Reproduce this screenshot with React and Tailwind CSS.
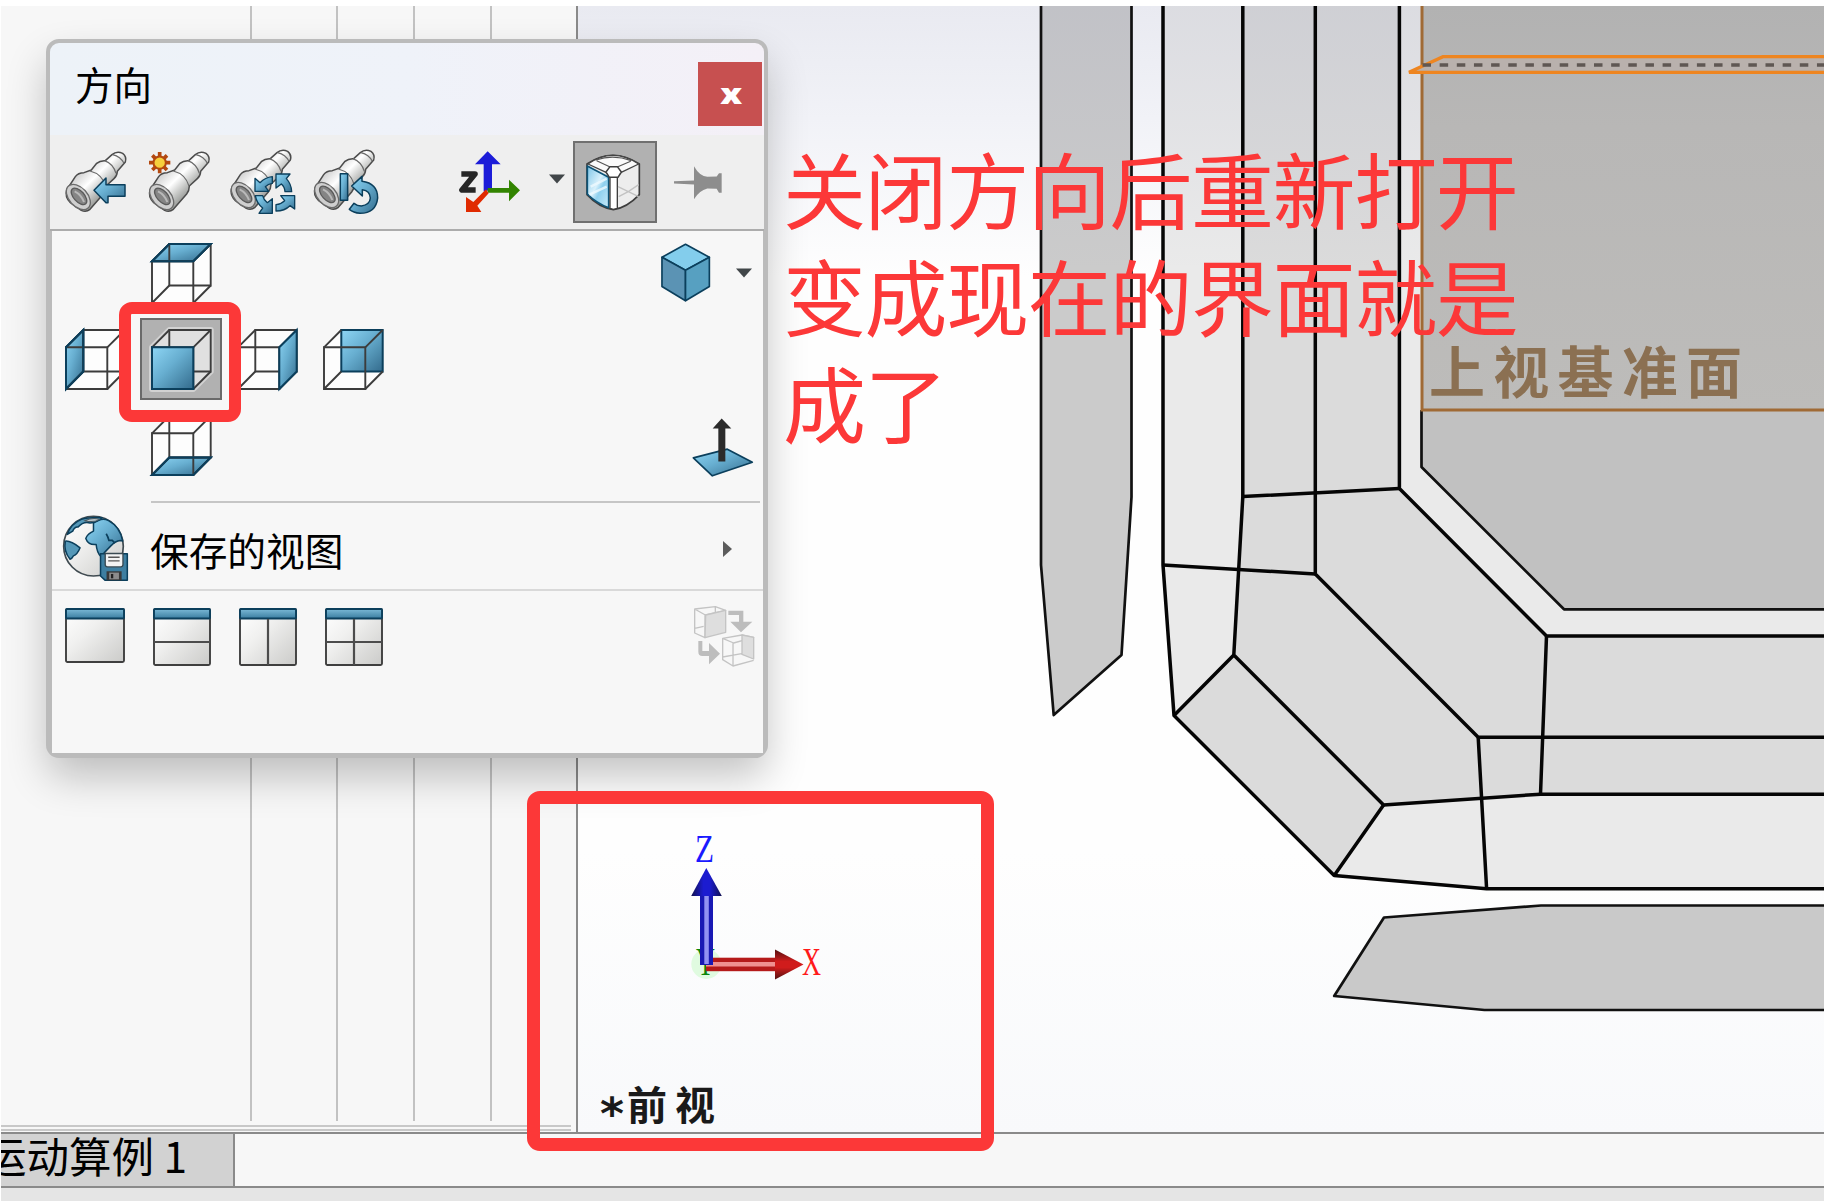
const CJK = "font-['Noto_Sans_CJK_SC','Noto_Sans',sans-serif]";

const EDGE = '#3c3c3c';
const NAVY = '#0b3f5c';

function Defs() {
  return (
    <svg className="absolute h-0 w-0" aria-hidden="true">
      <defs>
        <linearGradient id="blue" x1="0" y1="0" x2="1" y2="1">
          <stop offset="0" stopColor="#8ed6f5" />
          <stop offset="0.45" stopColor="#67aed0" />
          <stop offset="1" stopColor="#336b8c" />
        </linearGradient>
        <linearGradient id="metal" x1="0.3" y1="0.3" x2="0.68" y2="0.68">
          <stop offset="0" stopColor="#d6d6d6" />
          <stop offset="0.4" stopColor="#ffffff" />
          <stop offset="1" stopColor="#999b98" />
        </linearGradient>
        <linearGradient id="pane" x1="0" y1="0" x2="1" y2="1">
          <stop offset="0" stopColor="#ffffff" />
          <stop offset="0.4" stopColor="#f0f0ef" />
          <stop offset="1" stopColor="#cbcbc9" />
        </linearGradient>
        <linearGradient id="bar" x1="0" y1="0" x2="0" y2="1">
          <stop offset="0" stopColor="#7bb9d6" />
          <stop offset="1" stopColor="#3a7da0" />
        </linearGradient>
        <linearGradient id="glass" x1="0" y1="0" x2="1" y2="1">
          <stop offset="0" stopColor="#7cc4e6" />
          <stop offset="0.45" stopColor="#d9f1fc" />
          <stop offset="0.6" stopColor="#8fd0ee" />
          <stop offset="1" stopColor="#c7eafa" />
        </linearGradient>
      </defs>
    </svg>
  );
}

function Telescope({ dx = 0, dy = 0 }) {
  return (
    <g transform={`translate(${dx} ${dy})`} strokeLinejoin="round">
      <path
        d="M360 480 L386 440 Q394 428 412 428 L434 420 L450 400 Q460 391 476 392 L496 374 Q510 362 528 370 Q541 380 536 396 L512 424 Q511 438 502 446 L478 468 Q478 482 470 492 L430 538 Q418 548 404 541 L370 517 Q354 500 360 480Z"
        fill="url(#metal)"
        stroke="#4c4c4c"
        strokeWidth="4.5"
      />
      <path d="M430 423 Q466 432 477 468 M474 392 Q500 402 508 430 M498 374 Q522 380 532 400" fill="none" stroke="#6a6a6a" strokeWidth="3.5" />
      <ellipse cx="395" cy="501" rx="44" ry="28" transform="rotate(48 395 501)" fill="#cfcfcf" stroke="#6a6a6a" strokeWidth="4" />
      <ellipse cx="397" cy="499" rx="30" ry="16" transform="rotate(48 397 499)" fill="#858585" stroke="#5a5a5a" strokeWidth="4" />
      <path d="M384 484 Q404 494 412 516" fill="none" stroke="#b9b9b9" strokeWidth="6" />
    </g>
  );
}

function PreviousViewIcon() {
  return (
    <svg viewBox="90 348 216 216" className="h-[72px] w-[72px]">
      <Telescope dx={-250} />
      <path d="M192 481 L228 444 V464 H285 V499 H234 V518 H228Z" fill="url(#blue)" stroke={NAVY} strokeWidth="4.5" strokeLinejoin="round" />
    </svg>
  );
}

function NewViewIcon() {
  return (
    <svg viewBox="342 348 216 216" className="h-[72px] w-[72px]">
      <Telescope />
      <g stroke="#b3480f" strokeWidth="11">
        <path d="M389 366 V430 M357 398 H421 M367 376 L411 420 M411 376 L367 420" />
      </g>
      <circle cx="389" cy="398" r="18.5" fill="#f6cf3c" stroke="#b3480f" strokeWidth="6" />
    </svg>
  );
}

function UpdateViewsIcon() {
  return (
    <svg viewBox="594 348 216 216" className="h-[72px] w-[72px]">
      <Telescope dx={245} dy={-6} />
      <g fill="url(#blue)" stroke={NAVY} strokeWidth="4" strokeLinejoin="round">
        <path d="M675 445 L690 458 Q706 442 727 440 V460 Q714 462 706 470 L716 484 H675Z" />
        <path d="M738 432 H780 L769 446 Q784 462 785 485 H765 Q764 470 754 462 L738 474Z" />
        <path d="M794 497 V537 L780 527 Q764 543 738 543 V524 Q754 522 764 512 L752 497Z" />
        <path d="M676 497 H698 Q700 508 712 518 L727 506 V550 H687 L698 534 Q680 520 676 497Z" />
      </g>
    </svg>
  );
}

function ResetViewsIcon() {
  return (
    <svg viewBox="846 348 216 216" className="h-[72px] w-[72px]">
      <Telescope dx={495} dy={-6} />
      <g fill="url(#blue)" stroke={NAVY} strokeWidth="4.5" strokeLinejoin="round">
        <path d="M931 431 H953 V511 H931Z" />
        <path d="M965 468 L996 439 V454 Q1043 460 1043 504 Q1038 550 990 550 Q970 548 958 538 L972 520 Q982 528 994 528 Q1020 524 1021 504 Q1020 482 997 479 V498Z" />
      </g>
    </svg>
  );
}

function AxesIcon() {
  return (
    <svg viewBox="108 348 216 216" className="h-[72px] w-[72px]">
      <path d="M191 484 V403 H165 L203 364 L242 403 H216 V480Z" fill="#1c1cd8" />
      <path d="M203 474 H267 V449 L300 481 L267 514 V488 H203Z" fill="#328400" />
      <path d="M198 478 L206 490 L172 527 L184 546 H138 V501 L160 516Z" fill="#e02a00" />
      <path d="M124 432 H165 L126 480 H167" fill="none" stroke="#262626" strokeWidth="17" strokeLinejoin="round" />
    </svg>
  );
}

function ViewSelectorIcon() {
  return (
    <svg viewBox="486 360 186 192" className="mr-[4px] h-[64px] w-[62px]">
      <path d="M501 402 Q578 350 658 402 V494 Q620 534 580 539 Q536 532 501 494Z" fill="#ededed" stroke="#3d3d3d" strokeWidth="5" strokeLinejoin="round" />
      <path d="M502 408 L566 442 V533 Q530 520 502 492Z" fill="url(#glass)" stroke="#0d5478" strokeWidth="5" strokeLinejoin="round" />
      <path d="M512 470 L560 446 M508 494 L560 470" stroke="#effaff" strokeWidth="7" opacity="0.8" />
      <path d="M570 440 H592 V535 L580 538 L570 535Z" fill="#fff" stroke="#3d3d3d" strokeWidth="4" />
      <path d="M594 470 L656 500 M596 500 L626 484 L656 464" fill="none" stroke="#c2c2c2" strokeWidth="4" />
      <path d="M504 402 Q578 350 656 402 L602 428 Q580 402 560 428Z" fill="#fafafa" stroke="#444" strokeWidth="4" strokeLinejoin="round" />
      <path d="M530 392 L572 412 M632 394 L590 412 M528 390 Q580 372 634 392" fill="none" stroke="#555" strokeWidth="3.5" />
      <path d="M558 426 L570 410 H592 L604 426 L594 442 H568Z" fill="#fff" stroke="#3d3d3d" strokeWidth="4.5" strokeLinejoin="round" />
    </svg>
  );
}

function PinIcon() {
  return (
    <svg viewBox="756 400 162 116" className="h-[39px] w-[54px]">
      <path d="M762 454 L822 452 V409 Q838 438 862 441 L890 440 L897 430 H905 V489 H897 L890 477 L862 476 Q838 482 822 508 V464 L762 461Z" fill="#8d8d8d" />
    </svg>
  );
}

function Caret() {
  return (
    <svg viewBox="0 0 16 10" className="h-[10px] w-[16px]">
      <path d="M0 0.5 H16 L8 9.5Z" fill="#414649" />
    </svg>
  );
}

const FACES = {
  top: '1,18.3 18.3,1 59.7,1 42.3,18.3',
  bottom: '1,60 18.3,42.5 59.7,42.5 42.3,60',
  left: '1,18.3 18.3,1 18.3,42.5 1,60',
  right: '42.3,18.3 59.7,1 59.7,42.5 42.3,60',
  front: '1,18.3 42.3,18.3 42.3,60 1,60',
  back: '18.3,1 59.7,1 59.7,42.5 18.3,42.5',
};

function WireCube({ face, selected }) {
  const front = face === 'front';
  const blue = <polygon points={FACES[face]} fill="url(#blue)" stroke={NAVY} strokeWidth="2" />;
  return (
    <svg viewBox="0 0 61 61" className="h-[61px] w-[61px] overflow-visible">
      {selected && <polygon points="1,18.3 18.3,1 59.7,1 59.7,42.5 42.3,60 1,60" fill="none" stroke="#d2d2d2" strokeWidth="6" strokeLinejoin="round" />}
      <polygon points="1,18.3 18.3,1 59.7,1 59.7,42.5 42.3,60 1,60" fill={selected ? '#e0e0e0' : '#fdfdfd'} />
      {!front && face !== 'right' && blue}
      <g fill="none" stroke={EDGE} strokeWidth="1.9">
        {face !== 'back' && <path d="M18.3 1 H59.7 V42.5 H18.3Z" />}
        <path d="M1 18.3 L18.3 1 M1 60 L18.3 42.5 M42.3 60 L59.7 42.5 M42.3 18.3 L59.7 1" />
        <path d="M1 18.3 H42.3 V60 H1Z" />
      </g>
      {(front || face === 'right') && blue}
      {(face === 'top' || face === 'left' || face === 'bottom') && (
        <polygon points={FACES[face]} fill="none" stroke={NAVY} strokeWidth="2" />
      )}
    </svg>
  );
}

function CubeCell({ face }) {
  if (!face) return <div />;
  const selected = face === 'front';
  return (
    <div className="flex items-center justify-center">
      {selected ? (
        <div className="flex h-[82px] w-[82px] items-center justify-center border-2 border-[#6a6a6a] bg-[#b1b1b1]">
          <WireCube face={face} selected />
        </div>
      ) : (
        <WireCube face={face} />
      )}
    </div>
  );
}

function SolidCubeIcon() {
  return (
    <svg viewBox="722 640 152 178" className="h-[59px] w-[51px]">
      <g stroke={NAVY} strokeWidth="5" strokeLinejoin="round">
        <path d="M798 644 L870 683 L798 722 L727 683Z" fill="#83cdec" />
        <path d="M727 683 L798 722 V814 L727 771Z" fill="#5b93b4" />
        <path d="M870 683 L798 722 V814 L870 771Z" fill="#57a0c1" />
      </g>
    </svg>
  );
}

function NormalToIcon() {
  return (
    <svg viewBox="278 50 186 182" className="h-[61px] w-[62px]">
      <path d="M282 172 L384 146 L459 185 L339 226Z" fill="url(#blue)" stroke={NAVY} strokeWidth="5" strokeLinejoin="round" />
      <path d="M357 183 V84 H340 L367 54 L396 84 H378 V183Z" fill="#2b2b2b" />
    </svg>
  );
}

function GlobeSaveIcon() {
  return (
    <svg viewBox="66 82 200 200" className="mt-[5px] h-[67px] w-[67px]">
      <circle cx="160" cy="175" r="89" fill="url(#pane)" stroke="#3f4a50" strokeWidth="5" />
      <path d="M160 106 Q185 88 205 99 Q240 118 247 160 L240 158 Q225 160 214 172 Q200 186 182 206 Q170 194 168 170 Q144 172 137 152 Q142 138 160 130Z" fill="url(#blue)" stroke={NAVY} strokeWidth="4.5" strokeLinejoin="round" />
      <path d="M76 160 Q92 158 120 180 Q112 200 100 204 Q96 212 90 214 Q70 190 76 160Z" fill="#5598b8" stroke={NAVY} strokeWidth="4.5" strokeLinejoin="round" />
      <path d="M82 140 Q92 108 124 95 Q146 88 186 90 Q172 104 150 106 Q130 100 114 118 Q104 116 98 130Z" fill="#5598b8" stroke={NAVY} strokeWidth="4.5" strokeLinejoin="round" />
      <path d="M134 99 Q158 88 178 95 Q160 106 134 99Z" fill="#b9c4c9" stroke="#4a5960" strokeWidth="3" />
      <path d="M198 138 Q204 148 206 158 L216 158 L224 166" fill="none" stroke={NAVY} strokeWidth="5" />
      <path d="M181 198 H261 V277 H195 L181 264Z" fill="#3e7fa1" stroke={NAVY} strokeWidth="4.5" strokeLinejoin="round" />
      <path d="M195 197 H248 V230 Q248 237 241 237 H202 Q195 237 195 230Z" fill="#f3f3f3" stroke="#3a4a52" strokeWidth="4" />
      <path d="M204 208 H238 M204 219 H238" stroke="#555" strokeWidth="4" />
      <path d="M199 250 H244 V277 H199Z" fill="#3a3a3a" />
      <path d="M207 254 H236 V274 H207Z" fill="#8c8c8c" />
      <path d="M212 258 H219 V271 H212Z" fill="#222" />
    </svg>
  );
}

function PaneIcon({ h = 58, horizontal, vertical }) {
  const w = h === 55 ? 60 : 58;
  return (
    <svg width={w} height={h} viewBox={`0 0 ${w} ${h}`}>
      <rect x="1" y="1" width={w - 2} height={h - 2} rx="1.5" fill="url(#pane)" stroke="#3f3f3f" strokeWidth="1.9" />
      <rect x="1" y="1" width={w - 2} height="9.5" rx="1" fill="url(#bar)" stroke={NAVY} strokeWidth="1.9" />
      {horizontal && <path d={`M1 34 H${w - 1}`} stroke="#4c4c4c" strokeWidth="2.2" />}
      {vertical && <path d={`M29 11 V${h - 1}`} stroke="#4c4c4c" strokeWidth="2.2" />}
    </svg>
  );
}

function LinkViewsIcon() {
  return (
    <svg viewBox="278 616 186 186" className="h-[62px] w-[62px]">
      <g fill="none" stroke="#c4c4c4" strokeWidth="4" strokeLinejoin="round">
        <path d="M283 628 L345 621 L376 632 L315 646Z M283 628 V700 L314 714 V646 M283 686 L310 680 M345 621 V640" />
        <path d="M316 646 L376 632 V698 L314 714Z" fill="#dedede" />
        <path d="M367 716 L425 706 L460 713 L400 730Z M367 716 V780 L398 799 V730 M398 799 L460 782 M367 772 L424 762 L460 776" />
        <path d="M425 706 L460 713 V778 L425 764Z" fill="#dedede" />
      </g>
      <path d="M384 633 H429 V666 H456 L422 698 L390 666 H416 V646 H384Z M294 724 H306 V754 H326 V730 L359 762 L326 794 V769 H306 Q294 769 294 756Z" fill="#bdbdbd" />
    </svg>
  );
}

function OrientationDialog() {
  const cells = [null, 'top', null, null, 'left', 'front', 'right', 'back', null, 'bottom', null, null];
  return (
    <section className="absolute top-[39px] left-[46px] flex h-[719px] w-[722px] flex-col overflow-visible rounded-[13px] border-[4px] border-b-[5px] border-[#bbb] bg-[#bbb] shadow-[0_20px_42px_-2px_rgba(0,0,0,0.24)]">
      <header className="flex h-[92px] items-start justify-between rounded-t-[9px] bg-linear-to-r from-[#edf2f8] via-[#eff2f9] to-[#f4f0f7] pl-[25px]">
        <h1 className={`${CJK} mt-[12px] text-[38.5px] leading-[56px] font-normal text-black`}>方向</h1>
        <button className="mt-[19px] mr-[2px] flex h-[64px] w-[64px] items-center justify-center bg-[#c75050] pb-[3px] pl-[2px] font-['Open_Sans',sans-serif] text-[29px] leading-none font-extrabold text-white">
          <span className="scale-x-[1.2]">x</span>
        </button>
      </header>
      <div className="flex h-[96px] items-center border-b-2 border-[#acacac] bg-[#efefef]">
        <div className="ml-[10px] flex gap-[12px]">
          <PreviousViewIcon />
          <NewViewIcon />
          <UpdateViewsIcon />
          <ResetViewsIcon />
        </div>
        <div className="ml-[72px]"><AxesIcon /></div>
        <div className="mb-[6px] ml-[21px]"><Caret /></div>
        <div className="ml-[8px] flex h-[82px] w-[84px] items-center justify-center border-2 border-[#707070] bg-[#b1b1b1]">
          <ViewSelectorIcon />
        </div>
        <div className="ml-[15px]"><PinIcon /></div>
      </div>
      <div className="mr-[1px] ml-[2px] flex flex-1 flex-col bg-[#f7f7f7]">
        <div className="flex h-[270px] justify-between">
          <div className="-mt-px grid h-[258px] grid-cols-[repeat(4,86px)] grid-rows-[repeat(3,86px)]">
            {cells.map((face, i) => <CubeCell key={i} face={face} />)}
          </div>
          <div className="flex flex-col items-end justify-between pt-[12px] pr-[9px] pb-[23px]">
            <div className="mr-[2px] flex items-center gap-[25px]">
              <SolidCubeIcon />
              <Caret />
            </div>
            <NormalToIcon />
          </div>
        </div>
        <div className="mr-[3px] ml-[99px] h-[2px] bg-[#c6c6c6]" />
        <div className="flex h-[86px] items-center pl-[10px]">
          <GlobeSaveIcon />
          <span className={`${CJK} mb-[-6px] ml-[21px] text-[38.7px] leading-none font-normal text-black`}>保存的视图</span>
          <svg viewBox="0 0 9 16" className="mr-[31px] mb-[-5px] ml-auto h-[16px] w-[9px]"><path d="M0 0 L9 8 L0 16Z" fill="#5c5c5c" /></svg>
        </div>
        <div className="h-[2px] bg-[#d9d9d9]" />
        <div className="flex items-start pt-[14px] pr-[8px] pl-[13px]">
          <div className="mt-[3px] flex items-start gap-[28px]">
            <PaneIcon h={55} />
            <PaneIcon horizontal />
            <PaneIcon vertical />
            <PaneIcon horizontal vertical />
          </div>
          <div className="ml-auto"><LinkViewsIcon /></div>
        </div>
      </div>
    </section>
  );
}

function ModelScene() {
  return (
    <svg viewBox="578 6 1246 1127" className="block h-[1127px] w-[1246px]">
      <defs>
        <linearGradient id="sky" gradientUnits="userSpaceOnUse" x1="0" y1="6" x2="0" y2="1133">
          <stop offset="0" stopColor="#e9eaf1" />
          <stop offset="0.1" stopColor="#f1f2f7" />
          <stop offset="0.24" stopColor="#fefefe" />
          <stop offset="0.75" stopColor="#fefefe" />
          <stop offset="1" stopColor="#f8f9fb" />
        </linearGradient>
        <linearGradient id="haze" gradientUnits="userSpaceOnUse" x1="0" y1="6" x2="0" y2="270">
          <stop offset="0" stopColor="#8b8fb0" stopOpacity="0.15" />
          <stop offset="1" stopColor="#8b8fb0" stopOpacity="0" />
        </linearGradient>
        <linearGradient id="plane" gradientUnits="userSpaceOnUse" x1="0" y1="6" x2="0" y2="410">
          <stop offset="0" stopColor="#b2b2b2" />
          <stop offset="0.3" stopColor="#b8b7b6" />
          <stop offset="1" stopColor="#bdbcba" />
        </linearGradient>
        <linearGradient id="coneZ" x1="0" x2="1"><stop offset="0" stopColor="#111150" /><stop offset="0.4" stopColor="#1c1cd0" /><stop offset="0.6" stopColor="#1c1cd0" /><stop offset="1" stopColor="#111150" /></linearGradient>
        <linearGradient id="coneX" x1="0" x2="0" y1="0" y2="1"><stop offset="0" stopColor="#501010" /><stop offset="0.4" stopColor="#d01c1c" /><stop offset="0.6" stopColor="#d01c1c" /><stop offset="1" stopColor="#501010" /></linearGradient>
      </defs>
      <rect x="578" y="6" width="1246" height="1127" fill="url(#sky)" />

      <polygon points="1041,0 1131.5,0 1131.5,497 1121.5,655.5 1053.7,715.5 1041,565" fill="#cbcbcb" />
      <polygon points="1830,905.7 1541,905.7 1384,918 1334.2,996.4 1484.5,1010 1830,1010" fill="#c9c9c9" />
      <polygon points="1163,0 1830,0 1830,889 1486.6,889 1334.2,875.7 1174,716 1163,565" fill="#eaeaea" />
      <polygon points="1242.8,0 1399.4,0 1399.4,488.5 1546.5,636 1830,636 1830,794.5 1540.5,794.5 1383.6,805 1334.2,875.7 1174,716 1233.8,655 1242.8,497" fill="#dbdbdb" />
      <rect x="1041" y="6" width="90.5" height="264" fill="url(#haze)" />
      <rect x="1163" y="6" width="259" height="264" fill="url(#haze)" />
      <polygon points="1421.5,0 1830,0 1830,609.3 1564,609.3 1421.5,467" fill="#c1c1c1" />
      <rect x="1421.5" y="6" width="410" height="404" fill="url(#plane)" />

      <g fill="none" stroke="#111" strokeWidth="2.7" strokeLinejoin="round">
        <polygon points="1041,0 1131.5,0 1131.5,497 1121.5,655 1053.7,715 1041,565" />
        <polygon points="1830,905.5 1541,905.5 1384,917.5 1334.2,996 1484.5,1010 1830,1010" />
        <path d="M1421.5 410 V467 L1564 609.3 H1830" />
      </g>
      <g fill="none" stroke="#050505" strokeWidth="3.5" strokeLinejoin="round">
        <path d="M1163 0 V565 L1174 715.5 L1334.2 875.5 L1486.6 888.7 H1830" />
        <path d="M1242.8 0 V497 L1233.8 655 L1383.6 805 L1540.5 794.2 H1830" />
        <path d="M1315.3 0 V574 L1478.2 737.3 H1830" />
        <path d="M1399.4 0 V488.5 L1546.5 636 H1830" />
        <path d="M1242.8 496.6 L1399.4 488.5 M1163 565 L1315.3 574 M1233.8 655 L1174 715.5 M1383.6 805 L1334.2 875.5 M1478.2 737.3 L1486.6 888.7 M1546.5 636 L1540.5 794.2" />
      </g>

      <path d="M1422 0 V410 H1830" fill="none" stroke="#a06a35" strokeWidth="3" />
      <polygon points="1409,72.3 1443,56.7 1830,56.7 1830,72.3" fill="#b9b1ad" stroke="#ee8520" strokeWidth="3.2" />
      <path d="M1422.5 65 H1830" stroke="#5f5753" strokeWidth="3.4" strokeDasharray="8.5 8.65" />
      <text x="1429" y="393" textLength="313" fill="#8b7052" fontSize="56" fontWeight="700" className={CJK}>上视基准面</text>

      <circle cx="706.3" cy="964" r="15" fill="#e0fbe0" />
      <text x="696" y="975" fill="#0a860a" fontSize="39" textLength="19" lengthAdjust="spacingAndGlyphs" className="font-['Liberation_Serif',serif]">Y</text>
      <rect x="706" y="957.7" width="70" height="13.5" fill="#b51a1a" />
      <rect x="706" y="962" width="70" height="4.5" fill="#f09090" />
      <polygon points="775,949.5 803.5,964.5 775,979.5" fill="url(#coneX)" />
      <rect x="700" y="894" width="13" height="71" fill="#1919b4" />
      <rect x="704.3" y="894" width="4.5" height="70" fill="#9292f2" />
      <polygon points="706.3,868 721.8,896 691.2,896" fill="url(#coneZ)" />
      <text x="695" y="861.5" fill="#1a1aff" fontSize="39" textLength="19" lengthAdjust="spacingAndGlyphs" className="font-['Liberation_Serif',serif]">Z</text>
      <text x="802" y="975" fill="#ff1a1a" fontSize="39" textLength="19" lengthAdjust="spacingAndGlyphs" className="font-['Liberation_Serif',serif]">X</text>
      <text x="600" y="1129" fill="#1a1a1a" fontSize="44" fontWeight="700" textLength="24" lengthAdjust="spacingAndGlyphs" className="font-['DejaVu_Sans',sans-serif]">*</text>
      <text x="627" y="1120" fill="#1a1a1a" fontSize="40" fontWeight="700" textLength="88" className={CJK}>前视</text>
    </svg>
  );
}

export default function App() {
  return (
    <div className="relative flex h-[1201px] w-[1824px] flex-col overflow-hidden bg-white pt-[6px] pl-px">
      <Defs />
      <main className="flex h-[1126px] overflow-hidden">
        <aside className="flex w-[577px] shrink-0 flex-col border-r-2 border-[#8a8a8a] bg-[#f7f7f7]">
          <div className="flex h-[1115px]">
            <div className="w-[251px] border-r-2 border-[#c2c2c2]" />
            <div className="w-[86px] border-r-2 border-[#c2c2c2]" />
            <div className="w-[77px] border-r-2 border-[#c2c2c2]" />
            <div className="w-[77px] border-r-2 border-[#c2c2c2]" />
          </div>
          <div className="mt-[4px] mr-[5px] h-[6px] border-y-2 border-[#c8c8c8]" />
        </aside>
        <ModelScene />
      </main>
      <nav className="flex h-[56px] shrink-0 border-y-2 border-[#8a8a8a] bg-[#f7f7f7]">
        <div className="flex w-[234px] justify-start overflow-hidden border-r-2 border-[#8a8a8a] bg-[#d2d2d2]">
          <span className={`${CJK} mt-[-3px] ml-[-17px] text-[42.5px] leading-[48px] font-normal whitespace-pre text-black`}>运动算例 1</span>
        </div>
      </nav>
      <footer className="flex-1 bg-[#e5e5e5]" />

      <OrientationDialog />

      <div className="absolute top-[301.5px] left-[119px] h-[120px] w-[122px] rounded-[13px] border-[12.5px] border-[#fc3838]" />
      <div className="absolute top-[790.5px] left-[527px] h-[360.5px] w-[467px] rounded-[13px] border-[13px] border-[#fc3838]" />
      <p className={`${CJK} absolute top-[134px] left-[783px] w-[760px] text-[83px] leading-[107px] tracking-[-1.4px] whitespace-nowrap text-[#fc3838]`}>
        关闭方向后重新打开
        <br />
        变成现在的界面就是
        <br />
        成了
      </p>
    </div>
  );
}
